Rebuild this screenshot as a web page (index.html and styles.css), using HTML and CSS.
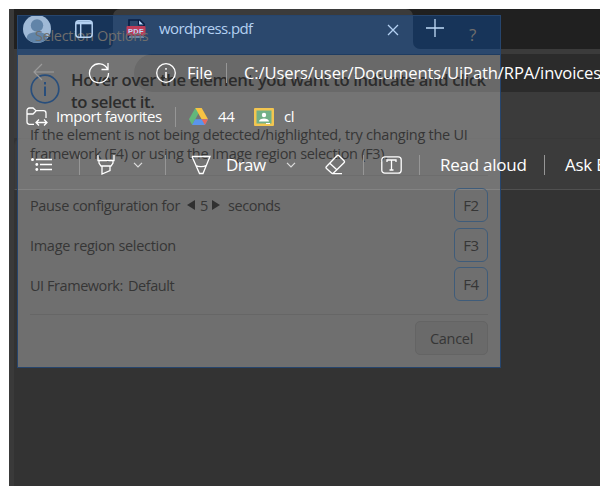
FILE: index.html
```html
<!DOCTYPE html>
<html lang="en">
<head>
<meta charset="utf-8">
<title>wordpress.pdf</title>
<link rel="stylesheet" href="styles.css">
</head>
<body>
<div class="window">
  <header class="tabstrip">
    <div class="strip-start">
      <svg class="avatar" width="28" height="28" viewBox="0 0 28 28"><circle cx="14" cy="14" r="14" fill="#d7d3c8"/><circle cx="14" cy="10.500" r="6.200" fill="#848b8a"/><path d="M3.700 23.300C4 18.500 8 17.200 14 17.200s10 1.300 10.300 6.100A14 14 0 0 1 3.700 23.300z" fill="#848b8a"/></svg>
      <svg class="workspaces" width="18" height="18" viewBox="0 0 18 18" fill="none" stroke="#b4d1f2" stroke-width="1.500"><rect x=".8" y=".8" width="16.400" height="16.400" rx="3"/><path d="M5.700 4v13" /><path d="M1 2.800h16" stroke-width="3"/></svg>
    </div>
    <div class="tab">
      <svg class="pdf-icon" width="20" height="19" viewBox="0 0 20 19"><path d="M3 18V1h11l4 4v13" fill="none" stroke="#0c0000" stroke-width="1.600"/><path d="M12.500 1v5h5" fill="#fff" stroke="#0c0000" stroke-width="1.200"/><path d="M3 18h15" stroke="#e8e0dc"/><rect x=".5" y="7" width="19" height="9.500" rx="1" fill="#ff2a20"/><text x="10" y="14.500" text-anchor="middle">PDF</text></svg>
      <span class="tab-title">wordpress.pdf</span>
      <svg class="close" width="12" height="12" viewBox="0 0 12 12"><path d="M1 1l10 10M11 1L1 11" stroke="#b4d1f2" stroke-width="1.300"/></svg>
    </div>
    <div class="strip-end"><svg width="18" height="18" viewBox="0 0 18 18"><path d="M9 0v18M0 9h18" stroke="#c0daf7" stroke-width="1.300"/></svg></div>
  </header>

  <nav class="navbar">
    <svg class="back" width="22" height="18" viewBox="0 0 22 18" fill="none" stroke="#9b9b9b" stroke-width="1.200"><path d="M21 9H1M9 1L1 9l8 8"/></svg>
    <svg class="reload" width="22" height="22" viewBox="0 0 22 22" fill="none" stroke="#fff" stroke-width="1.300"><path d="M19.500 7A9.500 9.500 0 1 0 20.500 11M20 1v6.500h-6.500"/></svg>
    <div class="address">
      <svg width="20" height="20" viewBox="0 0 20 20" fill="none" stroke="#fff" stroke-width="1.300"><circle cx="10" cy="10" r="9.300"/><path d="M10 9v6M10 5v1.800" stroke-width="1.500"/></svg>
      <span class="file">File</span>
      <i class="divider"></i>
      <span class="url">C:/Users/user/Documents/UiPath/RPA/invoices</span>
    </div>
  </nav>

  <div class="favorites">
    <svg class="folder" width="22" height="20" viewBox="0 0 22 20" fill="none" stroke="#fff" stroke-width="1.300"><path d="M8 17.300H3.500a2.500 2.500 0 0 1-2.500-2.500V3.500A2.500 2.500 0 0 1 3.500 1H7l3 2.700h7.500A2.500 2.500 0 0 1 20 6.200V11M1 7h6l3-3M10 15.500h11M13 12.500l-3 3 3 3M18 12.500l3 3-3 3"/></svg>
    <span class="import">Import favorites</span>
    <i class="divider"></i>
    <svg class="drive" width="19" height="17" viewBox="0 0 19 17"><path d="M6.300 0h6.200L3.200 17 0 11.300z" fill="#62b77b"/><path d="M6.300 0h6.400l6.300 11.300h-6.400z" fill="#f7c343"/><path d="M6.200 11.300H19L15.900 17H3.100z" fill="#5b95ec"/><path d="M12.600 11.300H19L15.900 17z" fill="#e8685c"/></svg>
    <span class="fav-drive">44</span>
    <svg class="classroom" width="20" height="18" viewBox="0 0 20 18"><rect width="20" height="18" rx="1" fill="#f3c650"/><rect x="2.500" y="2.500" width="15" height="13" fill="#72b087"/><circle cx="10" cy="7" r="2.200" fill="#fff"/><path d="M5 13.500c0-4 10-4 10 0zM12 15h4v1h-4z" fill="#fff"/></svg>
    <span class="fav-class">cl</span>
  </div>

  <div class="pdfbar">
    <svg class="contents" width="21" height="13" viewBox="0 0 21 13"><path d="M5 1.500h16M9 6.500h12M9 11.500h12" stroke="#fff" stroke-width="1.400"/><circle cx="1.500" cy="1.500" r="1.500" fill="#fff"/><circle cx="5.800" cy="6.500" r="1.400" fill="#fff"/><circle cx="5.800" cy="11.500" r="1.400" fill="#fff"/></svg>
    <i class="divider first"></i>
    <svg class="marker" width="18" height="20" viewBox="0 0 18 20" fill="none" stroke="#fff" stroke-width="1.300"><path d="M1 0v5.500h16V0M2 5.500V8l2 3h10l2-3V5.500M5 11v8l8-3.500V11"/></svg>
    <svg class="chev one" width="10" height="6" viewBox="0 0 10 6"><path d="M1 .8l4 4 4-4" fill="none" stroke="#ddd" stroke-width="1.200"/></svg>
    <i class="divider second"></i>
    <svg class="pen" width="20" height="20" viewBox="0 0 20 20" fill="none" stroke="#fff" stroke-width="1.300"><path d="M1 1.500h18L12 18.500H8.500L1 1.500M5 10.500c2 1.500 8 1.500 10 0"/></svg>
    <span class="draw">Draw</span>
    <svg class="chev two" width="10" height="6" viewBox="0 0 10 6"><path d="M1 .8l4 4 4-4" fill="none" stroke="#ddd" stroke-width="1.200"/></svg>
    <svg class="eraser" width="21" height="21" viewBox="0 0 21 21" fill="none" stroke="#fff" stroke-width="1.300"><path d="M1.500 12.500L12 1.700q1-1 2 0l5 5q1 1 0 2L8.500 19q-1 1-2 0l-5-4.500q-1-1 0-2zM4.800 9.200l7 6.500M7 19.700h10"/></svg>
    <i class="divider third"></i>
    <svg class="textbox" width="21" height="18" viewBox="0 0 21 18" fill="none" stroke="#fff" stroke-width="1.300"><rect x=".8" y=".8" width="19.400" height="16.400" rx="3"/><path d="M6 6V4h9v2M10.500 4v10M8.500 14h4"/></svg>
    <i class="divider fourth"></i>
    <span class="read">Read aloud</span>
    <i class="divider fifth"></i>
    <span class="ask">Ask Bing</span>
  </div>

  <section class="dialog">
    <div class="dialog-header"><span>Selection Options</span><b>?</b></div>
    <div class="dialog-body">
      <div class="lead">
        <svg width="30" height="30" viewBox="0 0 30 30" fill="none" stroke="#284e7c"><circle cx="15" cy="15" r="13.800" stroke-width="1.700"/><path d="M15 12.500V22M15 8v2.500" stroke-width="2"/></svg>
        <h1><span class="l1">Hover over the element you want to indicate and click</span><br><span class="l2">to select it.</span></h1>
      </div>
      <p><span class="p1">If the element is not being detected/highlighted, try changing the UI</span><br><span class="p2">framework (F4) or using the Image region selection (F3).</span></p>
      <div class="options">
        <div class="option"><span class="o1">Pause configuration for</span><i class="tri left"></i><span class="count">5</span><i class="tri right"></i><span class="sec">seconds</span><kbd>F2</kbd></div>
        <div class="option"><span class="o2">Image region selection</span><kbd>F3</kbd></div>
        <div class="option"><span class="o3">UI Framework:</span><span class="def">Default</span><kbd>F4</kbd></div>
      </div>
      <div class="actions"><button>Cancel</button></div>
    </div>
  </section>
</div>
</body>
</html>
```
FILE: styles.css
```css
* { box-sizing: border-box; }
body { margin: 0; width: 600px; height: 486px; overflow: hidden; background: #fff; font-family: "Open Sans", "Noto Sans", sans-serif; }
.window { position: relative; margin: 9px 0 0 9px; width: 591px; height: 477px; background: #333; overflow: hidden; border-left: 5px solid #3a3a3a; }
svg { display: block; flex: none; }
span { white-space: nowrap; flex: none; }
.divider { width: 1px; height: 20px; background: #969696; flex: none; }

/* Toolbar glyphs and labels paint above the translucent dialog. */
.workspaces, .close, .strip-end svg, .tab-title, .navbar svg, .navbar span, .favorites > *, .pdfbar > *, .address .divider { position: relative; z-index: 2; }

.tabstrip { display: flex; height: 40px; margin-left: -5px; background: linear-gradient(#202020 20px, #3b3b3b 20px); }
.strip-start { display: flex; width: 104px; background: #202020; border-radius: 0 0 7px 0; padding: 6px 0 0 14px; }
.workspaces { margin: 5px 0 0 24px; }
.tab { display: flex; width: 300px; background: #3b3b3b; border-radius: 7px 7px 0 0; padding-left: 13px; }
.pdf-icon { margin-top: 10px; }
.pdf-icon text { font: bold 7.500px "Liberation Sans", sans-serif; fill: #fff; letter-spacing: .3px; }
.tab-title { width: 96px; margin: 8px 0 0 13px; font-size: 15px; letter-spacing: -.6px; line-height: 22px; color: #b4d1f2; }
.close { margin: 15px 0 0 132px; }
.strip-end { flex: 1; background: #202020; border-radius: 0 0 0 7px; padding: 10px 0 0 13px; }

.navbar { display: flex; height: 49px; margin-left: -5px; background: #3b3b3b; padding-left: 24px; }
.back { margin-top: 14px; }
.reload { margin: 13px 0 0 33px; }
.address { display: flex; align-items: center; width: 480px; height: 38px; margin: 5px 0 0 24px; padding-left: 22px; background: #2b2b2b; border-radius: 19px 0 0 19px; flex: none; }
.file { width: 28px; margin-left: 11px; font-size: 16.500px; letter-spacing: -.2px; color: #fff; }
.address span { margin-top: -2px; }
.address .divider { margin: 0 17px 0 11px; }
.url { font-size: 16.600px; letter-spacing: -.13px; color: #fff; }

.favorites { display: flex; align-items: center; height: 40px; margin-left: -5px; background: #3b3b3b; padding: 0 0 3px 17px; font-size: 15px; letter-spacing: -.42px; color: #fff; }
.favorites span { margin-top: -2px; }
.import { width: 106px; margin-left: 8px; }
.favorites .divider { margin: 0 13px 0 13px; }
.fav-drive { width: 17px; margin-left: 10px; }
.classroom { margin-left: 19px; }
.fav-class { margin-left: 10px; }

.pdfbar { display: flex; align-items: center; height: 52px; background: #3b3b3b; border: solid #383838; border-width: 1px 0 0 1px; border-bottom: 1px solid #505050; border-radius: 7px 0 0 0; padding: 1px 0 0 16px; color: #fff; font-size: 17px; letter-spacing: -.25px; }
.pdfbar span { margin-top: -1px; }
.first { margin: 0 17px 0 27px; }
.one { margin-left: 18px; }
.second { margin: 0 25px 0 22px; }
.draw { width: 40px; margin-left: 15px; letter-spacing: -.6px; }
.two { margin-left: 20px; }
.eraser { margin-left: 29px; }
.third { margin: 0 17px; }
.fourth { margin: 0 20px 0 17px; }
.read { width: 87px; }
.fifth { margin: 0 20px 0 17px; }

.dialog { position: absolute; z-index: 1; left: 3px; top: 6px; width: 484px; height: 353px; border: 1px solid #26456d; color: #363636; font-size: 14.500px; letter-spacing: -.3px; }
.dialog-header { display: flex; justify-content: space-between; height: 39px; padding: 9px 24px 0 17px; background: rgba(0, 113, 255, .26); color: #6f6e6c; line-height: 22px; }
.dialog-header b { font-size: 17px; font-weight: 400; line-height: 20px; }
.dialog-body { height: 312px; padding: 16px 12px 0; background: rgba(255, 255, 255, .293); }
.lead { display: flex; height: 53px; }
.lead svg { margin-top: 3px; }
h1 { margin: -2px 0 0 11px; font-size: 16.700px; letter-spacing: -.37px; font-weight: 600; line-height: 22px; color: #2c2c2c; }
p { margin: 0; line-height: 19px; height: 52px; border-bottom: 1px solid #6d6d6d; padding-top: 1px; }
.p1 { letter-spacing: -.26px; }
.options { height: 139px; padding-top: 9px; border-bottom: 1px solid #666; }
.option { display: flex; align-items: center; height: 39.700px; }
.option span { margin-top: 2px; }
kbd { display: block; width: 34px; height: 34px; margin-left: auto; border: 1.500px solid #3f5c7a; border-radius: 6px; font: 15px/32px "Open Sans", sans-serif; letter-spacing: -.3px; text-align: center; }
.tri { border: solid transparent; border-width: 5px 0; }
.left { border-right: 8px solid #303030; margin-left: 7px; }
.right { border-left: 8px solid #303030; margin-left: 5px; }
.o1 { width: 150px; letter-spacing: -.35px; }
.count { width: 7px; margin-left: 5px; }
.sec { margin-left: 8px; letter-spacing: -.45px; }
.o3 { width: 92px; letter-spacing: -.45px; }
.def { margin-left: 6px; letter-spacing: -.45px; }
.actions { display: flex; justify-content: flex-end; padding-top: 6px; }
button { width: 73px; height: 34px; padding: 0; border: 1px solid #646464; border-radius: 5px; background: #6a6a6a; color: #363636; font: 14.500px "Open Sans", sans-serif; letter-spacing: -.3px; }
```
